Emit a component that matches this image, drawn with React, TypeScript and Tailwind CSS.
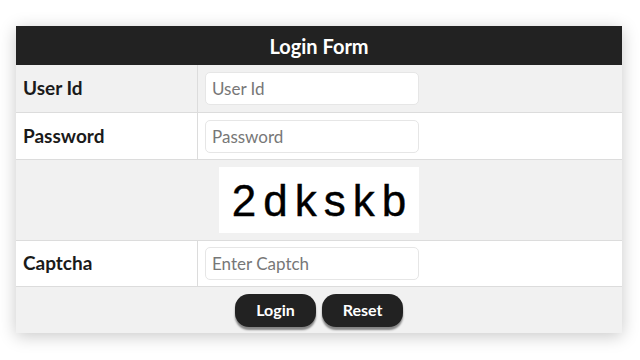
import React from "react";

const font = { fontFamily: "Lato, 'Open Sans', sans-serif" };

const Field = ({ label, placeholder, shade, h }: { label: string; placeholder: string; shade: boolean; h: string }) => (
  <div className={`grid grid-cols-[181px_1fr] border-b border-[#dcdcdc] ${h} ${shade ? "bg-[#f1f1f1]" : "bg-white"}`}>
    <div className="flex items-center px-[7px] text-[19px] font-bold text-[#1a1a1a]">{label}</div>
    <div className="flex items-center border-l border-[#dcdcdc] pl-[7px]">
      <input
        placeholder={placeholder}
        className="h-[33px] w-[214px] rounded-[5px] border border-[#e6e6e6] bg-white px-[6px] text-[17px] text-[#333] placeholder:text-[#777] outline-none"
      />
    </div>
  </div>
);

export default function App() {
  return (
    <div className="min-h-[360px] bg-white pt-[26px] px-[16px]" style={font}>
      <div className="w-[606px] shadow-[0_3px_16px_rgba(0,0,0,0.22)]">
        <div className="flex h-[39px] items-center justify-center bg-[#222222] text-[20px] font-bold text-white">Login Form</div>
        <Field label="User Id" placeholder="User Id" shade h="h-[48px]" />
        <Field label="Password" placeholder="Password" shade={false} h="h-[47px]" />
        <div className="flex h-[81px] items-center justify-center border-b border-[#dcdcdc] bg-[#f1f1f1]">
          <div
            className="flex h-[66px] w-[200px] items-center justify-center bg-white pl-[7px] pt-[2px] text-[44px] tracking-[7px] text-black [-webkit-text-stroke:0.4px_black]"
            style={{ fontFamily: "'Liberation Sans', Arial, sans-serif" }}
          >
            2dkskb
          </div>
        </div>
        <Field label="Captcha" placeholder="Enter Captch" shade={false} h="h-[46px]" />
        <div className="flex h-[46px] items-center justify-center gap-[6px] bg-[#f1f1f1]">
          <button className="h-[33px] w-[81px] rounded-[14px] bg-[#222222] text-[16px] font-bold text-white shadow-[0_3px_2px_rgba(0,0,0,0.45)]">
            Login
          </button>
          <button className="h-[33px] w-[81px] rounded-[14px] bg-[#222222] text-[16px] font-bold text-white shadow-[0_3px_2px_rgba(0,0,0,0.45)]">
            Reset
          </button>
        </div>
      </div>
    </div>
  );
}
